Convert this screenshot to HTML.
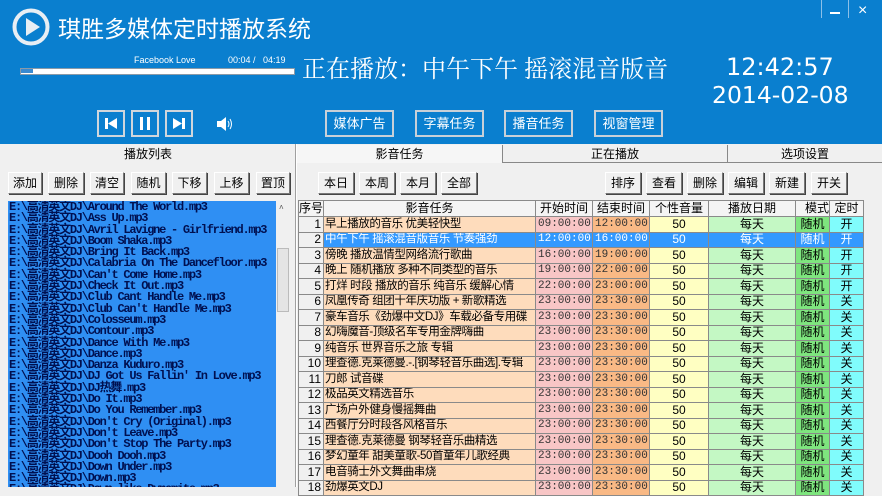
<!DOCTYPE html>
<html><head><meta charset="utf-8"><style>
*{margin:0;padding:0;box-sizing:border-box}
body{width:882px;height:487px;overflow:hidden;background:#f0f0f0;font-family:"Liberation Sans","Noto Sans CJK SC",sans-serif;position:relative;font-size:12px}
.a{position:absolute}
.hdr{left:0;top:0;width:882px;height:144px;background:#0a7fcf;color:#fff}
.cb{position:absolute;top:110px;width:28px;height:27px;border:2px solid #d0d6dc;background:#0a7fcf}
.mb{position:absolute;top:110px;width:69px;height:27px;border:2px solid #c8d0d8;color:#fff;font-size:13px;text-align:center;line-height:23px}
.btn{position:absolute;height:22px;top:172px;background:#f0f0f0;border:1px solid;border-color:#fff #777 #777 #fff;box-shadow:1px 1px 0 #444;font-size:12px;text-align:center;line-height:20px;color:#000}
.tab{position:absolute;top:145px;height:18px;text-align:center;font-size:12px;line-height:18px}
.lb{left:8px;top:201px;width:268px;height:286px;background:#2f8ff3;color:#001050;font-family:"Liberation Mono","Noto Sans CJK SC",monospace;font-size:12px;letter-spacing:-1.25px;line-height:11.3px;white-space:nowrap;overflow:hidden;padding-top:1px;padding-left:1px;font-weight:bold}
table{position:absolute;left:298px;top:200px;width:565px;border-collapse:collapse;table-layout:fixed;font-size:12px}
td{height:15.5px;border:1px solid #8a8a8a;padding:0 2px;white-space:nowrap;overflow:hidden;line-height:13px}
th{height:16px;border:1px solid #8a8a8a;background:#f4f4f4;font-weight:normal;font-size:12px;line-height:13px;overflow:hidden;white-space:nowrap}
td.n{background:#f0f0f0;text-align:right}
td.t{background:#fedcbc;text-align:left;font-size:11.5px;letter-spacing:-0.4px;padding:0 1px}
td.s{background:#f8c6c6;text-align:center;font-family:"Liberation Mono",monospace;font-size:11px;color:#333}
td.e{background:#f9b985;text-align:center;font-family:"Liberation Mono",monospace;font-size:11px;color:#333}
td.v{background:#ffffc2;text-align:center}
td.d{background:#c4f8c4;text-align:center}
td.m{background:#7ee57e;text-align:center}
td.k{background:#80fcfc;text-align:center}
tr.sel td{background:#3399ff;color:#fff}
tr.sel td.n{background:#f0f0f0;color:#000}
</style></head><body>
<div class="a hdr">
 <svg class="a" style="left:12px;top:8px" width="38" height="38"><circle cx="19" cy="19" r="16.5" fill="none" stroke="#e8eef4" stroke-width="4"/><path d="M14 10 L28 19 L14 28 Z" fill="#e8eef4"/></svg>
 <div class="a" style="left:58px;top:12px;font-size:23px;line-height:30px;font-family:'Noto Sans CJK SC',sans-serif">琪胜多媒体定时播放系统</div>
 <div class="a" style="left:821px;top:0;width:1px;height:18px;background:#8cc0e8"></div>
 <div class="a" style="left:848px;top:0;width:1px;height:18px;background:#8cc0e8"></div>
 <div class="a" style="left:830px;top:12px;width:10px;height:2px;background:#fff"></div>
 <div class="a" style="left:858px;top:0px;font-size:16px;line-height:22px">×</div>
 <div class="a" style="left:134px;top:55px;font-size:9px;line-height:11px">Facebook Love</div>
 <div class="a" style="left:228px;top:55px;font-size:9px;line-height:11px">00:04 /&nbsp;&nbsp; 04:19</div>
 <div class="a" style="left:20px;top:68px;width:275px;height:7px;background:#fff;border:1px solid #8a9aa8"></div>
 <div class="a" style="left:21px;top:69px;width:12px;height:4px;background:#3a8ad0"></div>
 <div class="a" style="left:302px;top:52px;font-size:24px;line-height:30px;font-family:'Noto Serif CJK SC','Noto Sans CJK SC',serif;white-space:nowrap">正在播放：中午下午 摇滚混音版音</div>
 <div class="a" style="left:726px;top:52px;font-size:24px;line-height:30px;font-family:'DejaVu Sans',sans-serif">12:42:57</div>
 <div class="a" style="left:712px;top:80px;font-size:23.5px;line-height:30px;font-family:'DejaVu Sans',sans-serif">2014-02-08</div>
 <div class="cb" style="left:97px"><svg width="24" height="23"><rect x="6" y="6" width="3" height="11" fill="#fff"/><path d="M9 11.5 L18 6 L18 17 Z" fill="#fff"/></svg></div>
 <div class="cb" style="left:131px"><svg width="24" height="23"><rect x="7" y="5" width="3" height="13" fill="#fff"/><rect x="14" y="5" width="3" height="13" fill="#fff"/></svg></div>
 <div class="cb" style="left:165px"><svg width="24" height="23"><path d="M6 6 L15 11.5 L6 17 Z" fill="#fff"/><rect x="15" y="6" width="3" height="11" fill="#fff"/></svg></div>
 <svg class="a" style="left:216px;top:116px" width="20" height="16"><path d="M1 5 H5 L10 1 V15 L5 11 H1 Z" fill="#fff"/><path d="M12 5 Q14 8 12 11 M14 3 Q17 8 14 13" stroke="#fff" fill="none" stroke-width="1"/></svg>
 <div class="mb" style="left:325px">媒体广告</div>
 <div class="mb" style="left:415px">字幕任务</div>
 <div class="mb" style="left:504px">播音任务</div>
 <div class="mb" style="left:594px">视窗管理</div>
</div>
<div class="tab" style="left:0;width:296px">播放列表</div>
<div class="a" style="left:295px;top:144px;width:2px;height:343px;border-left:1px solid #a0a0a0;border-right:1px solid #fff"></div>
<div class="tab" style="left:297px;width:205px;background:#f6f6f6">影音任务</div>
<div class="tab" style="left:502px;width:225px;border-left:1px solid #888;border-bottom:1px solid #888">正在播放</div>
<div class="tab" style="left:727px;width:155px;border-left:1px solid #888;border-bottom:1px solid #888">选项设置</div>
<div class="btn" style="left:8px;width:34px">添加</div>
<div class="btn" style="left:48px;width:36px">删除</div>
<div class="btn" style="left:90px;width:34px">清空</div>
<div class="btn" style="left:131px;width:35px">随机</div>
<div class="btn" style="left:172px;width:35px">下移</div>
<div class="btn" style="left:214px;width:35px">上移</div>
<div class="btn" style="left:256px;width:34px">置顶</div>
<div class="btn" style="left:318px;width:36px">本日</div>
<div class="btn" style="left:359px;width:36px">本周</div>
<div class="btn" style="left:400px;width:36px">本月</div>
<div class="btn" style="left:441px;width:36px">全部</div>
<div class="btn" style="left:605px;width:36px">排序</div>
<div class="btn" style="left:646px;width:36px">查看</div>
<div class="btn" style="left:687px;width:36px">删除</div>
<div class="btn" style="left:728px;width:36px">编辑</div>
<div class="btn" style="left:769px;width:36px">新建</div>
<div class="btn" style="left:811px;width:36px">开关</div>
<div class="a lb">E:\高清英文DJ\Around The World.mp3<br>E:\高清英文DJ\Ass Up.mp3<br>E:\高清英文DJ\Avril Lavigne - Girlfriend.mp3<br>E:\高清英文DJ\Boom Shaka.mp3<br>E:\高清英文DJ\Bring It Back.mp3<br>E:\高清英文DJ\Calabria On The Dancefloor.mp3<br>E:\高清英文DJ\Can't Come Home.mp3<br>E:\高清英文DJ\Check It Out.mp3<br>E:\高清英文DJ\Club Cant Handle Me.mp3<br>E:\高清英文DJ\Club Can't Handle Me.mp3<br>E:\高清英文DJ\Colosseum.mp3<br>E:\高清英文DJ\Contour.mp3<br>E:\高清英文DJ\Dance With Me.mp3<br>E:\高清英文DJ\Dance.mp3<br>E:\高清英文DJ\Danza Kuduro.mp3<br>E:\高清英文DJ\DJ Got Us Fallin' In Love.mp3<br>E:\高清英文DJ\DJ热舞.mp3<br>E:\高清英文DJ\Do It.mp3<br>E:\高清英文DJ\Do You Remember.mp3<br>E:\高清英文DJ\Don't Cry (Original).mp3<br>E:\高清英文DJ\Don't Leave.mp3<br>E:\高清英文DJ\Don't Stop The Party.mp3<br>E:\高清英文DJ\Dooh Dooh.mp3<br>E:\高清英文DJ\Down Under.mp3<br>E:\高清英文DJ\Down.mp3<br>E:\高清英文DJ\Down like Dynamite.mp3</div>
<div class="a" style="left:276px;top:201px;width:14px;height:286px;background:#f0f0f0"></div>
<div class="a" style="left:279px;top:203px;font-size:8px;color:#555">˄</div>
<div class="a" style="left:277px;top:248px;width:12px;height:64px;background:#e4e4e4;border:1px solid #bbb"></div>
<table>
<colgroup><col style="width:25px"><col style="width:212px"><col style="width:57px"><col style="width:57px"><col style="width:59px"><col style="width:87px"><col style="width:34px"><col style="width:34px"></colgroup>
<tr><th>序号</th><th>影音任务</th><th>开始时间</th><th>结束时间</th><th>个性音量</th><th>播放日期</th><th style="text-align:right">模式</th><th>定时</th></tr>
<tr><td class="n">1</td><td class="t">早上播放的音乐 优美轻快型</td><td class="s">09:00:00</td><td class="e">12:00:00</td><td class="v">50</td><td class="d">每天</td><td class="m">随机</td><td class="k">开</td></tr>
<tr class="sel"><td class="n">2</td><td class="t">中午下午 摇滚混音版音乐 节奏强劲</td><td class="s">12:00:00</td><td class="e">16:00:00</td><td class="v">50</td><td class="d">每天</td><td class="m">随机</td><td class="k">开</td></tr>
<tr><td class="n">3</td><td class="t">傍晚 播放温情型网络流行歌曲</td><td class="s">16:00:00</td><td class="e">19:00:00</td><td class="v">50</td><td class="d">每天</td><td class="m">随机</td><td class="k">开</td></tr>
<tr><td class="n">4</td><td class="t">晚上 随机播放 多种不同类型的音乐</td><td class="s">19:00:00</td><td class="e">22:00:00</td><td class="v">50</td><td class="d">每天</td><td class="m">随机</td><td class="k">开</td></tr>
<tr><td class="n">5</td><td class="t">打烊 时段 播放的音乐  纯音乐 缓解心情</td><td class="s">22:00:00</td><td class="e">23:00:00</td><td class="v">50</td><td class="d">每天</td><td class="m">随机</td><td class="k">开</td></tr>
<tr><td class="n">6</td><td class="t">凤凰传奇 组团十年庆功版 +  新歌精选</td><td class="s">23:00:00</td><td class="e">23:30:00</td><td class="v">50</td><td class="d">每天</td><td class="m">随机</td><td class="k">关</td></tr>
<tr><td class="n">7</td><td class="t">豪车音乐《劲爆中文DJ》车载必备专用碟</td><td class="s">23:00:00</td><td class="e">23:30:00</td><td class="v">50</td><td class="d">每天</td><td class="m">随机</td><td class="k">关</td></tr>
<tr><td class="n">8</td><td class="t">幻嗨魔音-顶级名车专用金牌嗨曲</td><td class="s">23:00:00</td><td class="e">23:30:00</td><td class="v">50</td><td class="d">每天</td><td class="m">随机</td><td class="k">关</td></tr>
<tr><td class="n">9</td><td class="t">纯音乐 世界音乐之旅 专辑</td><td class="s">23:00:00</td><td class="e">23:30:00</td><td class="v">50</td><td class="d">每天</td><td class="m">随机</td><td class="k">关</td></tr>
<tr><td class="n">10</td><td class="t">理查德.克莱德曼.-.[钢琴轻音乐曲选].专辑</td><td class="s">23:00:00</td><td class="e">23:30:00</td><td class="v">50</td><td class="d">每天</td><td class="m">随机</td><td class="k">关</td></tr>
<tr><td class="n">11</td><td class="t">刀郎 试音碟</td><td class="s">23:00:00</td><td class="e">23:30:00</td><td class="v">50</td><td class="d">每天</td><td class="m">随机</td><td class="k">关</td></tr>
<tr><td class="n">12</td><td class="t">极品英文精选音乐</td><td class="s">23:00:00</td><td class="e">23:30:00</td><td class="v">50</td><td class="d">每天</td><td class="m">随机</td><td class="k">关</td></tr>
<tr><td class="n">13</td><td class="t">广场户外健身慢摇舞曲</td><td class="s">23:00:00</td><td class="e">23:30:00</td><td class="v">50</td><td class="d">每天</td><td class="m">随机</td><td class="k">关</td></tr>
<tr><td class="n">14</td><td class="t">西餐厅分时段各风格音乐</td><td class="s">23:00:00</td><td class="e">23:30:00</td><td class="v">50</td><td class="d">每天</td><td class="m">随机</td><td class="k">关</td></tr>
<tr><td class="n">15</td><td class="t">理查德.克莱德曼 钢琴轻音乐曲精选</td><td class="s">23:00:00</td><td class="e">23:30:00</td><td class="v">50</td><td class="d">每天</td><td class="m">随机</td><td class="k">关</td></tr>
<tr><td class="n">16</td><td class="t">梦幻童年 甜美童歌-50首童年儿歌经典</td><td class="s">23:00:00</td><td class="e">23:30:00</td><td class="v">50</td><td class="d">每天</td><td class="m">随机</td><td class="k">关</td></tr>
<tr><td class="n">17</td><td class="t">电音骑士外文舞曲串烧</td><td class="s">23:00:00</td><td class="e">23:30:00</td><td class="v">50</td><td class="d">每天</td><td class="m">随机</td><td class="k">关</td></tr>
<tr><td class="n">18</td><td class="t">劲爆英文DJ</td><td class="s">23:00:00</td><td class="e">23:30:00</td><td class="v">50</td><td class="d">每天</td><td class="m">随机</td><td class="k">关</td></tr>
</table>
</body></html>
